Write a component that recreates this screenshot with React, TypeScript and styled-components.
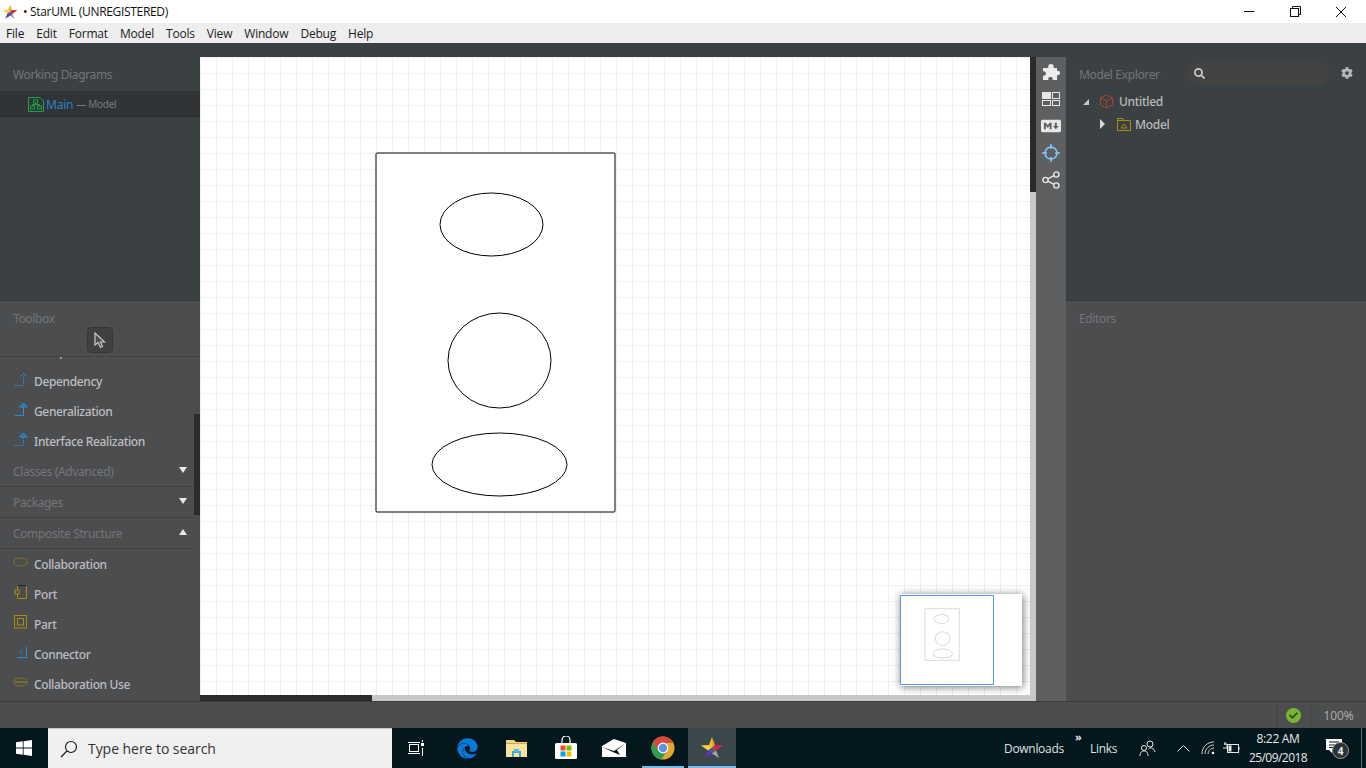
import React from "react";
import styled, { createGlobalStyle } from "styled-components";
import { FaCog, FaSearch, FaEdge, FaMarkdown, FaCheck } from "react-icons/fa";

const Global = createGlobalStyle`
  html, body { margin: 0; padding: 0; height: 100%; overflow: hidden; background: #4c4d4f; }
  * { box-sizing: border-box; }
`;

const Page = styled.div`
  width: 1366px; height: 768px; display: flex; flex-direction: column; overflow: hidden;
  font-family: "Noto Sans", "Open Sans", sans-serif;
`;
const TitleBar = styled.div`
  height: 23px; background: #fff; display: flex; align-items: center; padding-left: 2px;
  font-size: 12px; color: #111; font-family: "Open Sans", sans-serif;
`;
const TitleText = styled.span` margin-left: 5px; letter-spacing: -0.32px; `;
const WinButtons = styled.div` margin-left: auto; display: flex; height: 23px; padding-right: 2px; `;
const WinButton = styled.div`
  width: 46px; height: 23px; display: flex; align-items: center; justify-content: center;
`;
const MenuBar = styled.div`
  height: 20px; background: #eeeeee; display: flex; align-items: center; font-family: "Open Sans", sans-serif;
  font-size: 12px; color: #1c1c1c;
`;
const MenuItem = styled.span` padding: 0 6px; letter-spacing: -0.2px; `;

const Main = styled.div` height: 658px; display: flex; `;
const SideColumn = styled.div<{ $w: number }>`
  width: ${p => p.$w}px; display: flex; flex-direction: column; flex: none;
`;
const DarkPanel = styled.div`
  height: 258px; background: #3b4043; border-bottom: 1px solid #353839; flex: none;
`;
const LightPanel = styled.div`
  height: 400px; background: #4c4d4f; flex: none; display: flex; flex-direction: column; overflow: hidden;
`;
const PanelHeading = styled.div<{ $top?: number }>`
  height: 48px; padding: ${p => p.$top ?? 22}px 0 0 13px; font-size: 12px; line-height: 20px; color: #747678; flex: none;
  letter-spacing: -0.36px;
`;
const SelectedRow = styled.div`
  height: 26px; background: #303437; border-top: 1px solid #2e3234; border-bottom: 1px solid #2a2e30;
  display: flex; align-items: center; padding-left: 28px; font-size: 12px; color: #2f7fc4; letter-spacing: -0.2px;
`;
const RowNote = styled.span` margin-left: 3px; font-size: 10px; color: #787b7d; letter-spacing: -0.3px; `;
const ToolHeader = styled.div`
  height: 56px; flex: none; border-bottom: 1px solid #404143; position: relative;
  padding: 8px 0 0 13px; font-size: 12px; line-height: 20px; color: #747678; letter-spacing: -0.36px;
`;
const CursorButton = styled.div`
  position: absolute; left: 87px; top: 26px; width: 26px; height: 26px; border-radius: 4px;
  background: #3f4041; border: 1px solid #353637; display: flex; align-items: center; justify-content: center;
`;
const ToolList = styled.div` flex: 1; overflow: hidden; position: relative; `;
const ToolScrollInner = styled.div` margin-top: -21px; `;
const ToolThumb = styled.div`
  position: absolute; right: 0; top: 57px; width: 6px; height: 101px; background: #2b2b2b;
`;
const ToolItem = styled.div`
  height: 30px; display: flex; align-items: center; font-size: 12px; color: #bdbec0; font-weight: 500; letter-spacing: -0.36px;
`;
const ToolIcon = styled.span`
  width: 34px; flex: none; display: flex; justify-content: flex-end; position: relative; left: -6px;
  height: 18px; align-items: center; top: -2px;
`;
const GroupHeader = styled.div`
  height: 31px; width: 194px; border-bottom: 1px solid #3d3e40; display: flex; align-items: center; justify-content: space-between;
  padding: 0 7px 0 13px; font-size: 12px; color: #747678; letter-spacing: -0.36px;
`;
const CaretText = styled.span` display: flex; margin-top: -3px; `;

const MiddleColumn = styled.div` flex: 1; display: flex; flex-direction: column; min-width: 0; `;
const TopStrip = styled.div` height: 14px; background: #3b4043; flex: none; `;
const WorkRow = styled.div` flex: 1; display: flex; min-height: 0; `;
const CanvasWrap = styled.div` width: 836px; display: flex; flex-direction: column; flex: none; `;
const CanvasRow = styled.div` flex: 1; display: flex; min-height: 0; `;
const Canvas = styled.div`
  width: 830px; height: 638px; position: relative; overflow: hidden; background-color: #fff;
  background-image:
    linear-gradient(to right, #f0f0f0 1px, transparent 1px),
    linear-gradient(to bottom, #f0f0f0 1px, transparent 1px);
  background-size: 16px 16px;
`;
const DiagramSvg = styled.svg` position: absolute; left: 0; top: 0; `;
const VScroll = styled.div` width: 6px; background: #c8c8c8; `;
const VThumb = styled.div` width: 6px; height: 135px; background: #2b2b2b; `;
const HScroll = styled.div` height: 6px; background: #c8c8c8; flex: none; `;
const HThumb = styled.div` width: 172px; height: 6px; background: #2b2b2b; `;
const MiniMap = styled.div`
  position: absolute; left: 700px; top: 537px; width: 122px; height: 92px; background: #fff;
  box-shadow: 1px 1px 8px rgba(0,0,0,0.55);
`;
const MiniViewport = styled.div`
  position: absolute; left: 0; top: 1px; width: 94px; height: 90px; border: 1px solid #5b9bef;
`;
const MiniSvg = styled.svg` position: absolute; left: 0; top: 0; `;

const ToolStrip = styled.div`
  width: 30px; flex: none; background: #5e5f61; display: flex; flex-direction: column; align-items: center;
  padding-top: 1px;
`;
const StripBtn = styled.div`
  width: 30px; height: 27px; display: flex; align-items: center; justify-content: center; color: #e8e8e8;
`;

const ExplorerHead = styled.div`
  height: 47px; display: flex; align-items: flex-start; padding: 19px 0 0 13px; position: relative;
  font-size: 12px; color: #747678; line-height: 26px; letter-spacing: -0.36px;
`;
const SearchPill = styled.div`
  position: absolute; left: 120px; top: 19px; width: 144px; height: 23px; border-radius: 12px; background: #434442;
  border: 1px solid #3f4244; display: flex; align-items: center; padding-left: 7px; color: #c8c8c8;
`;
const GearSpot = styled.div` position: absolute; left: 275px; top: 24px; color: #b5b6b6; display: flex; `;
const TreeRow = styled.div<{ $indent: number; $h: number }>`
  height: ${p => p.$h}px; display: flex; align-items: center; padding-left: ${p => p.$indent}px;
  font-size: 12px; font-weight: 500; color: #b9babb; letter-spacing: -0.3px;
`;
const TreeCaret = styled.span<{ $w: number }>` width: ${p => p.$w}px; display: flex; flex: none; `;
const TreeIcon = styled.span<{ $w: number }>` width: ${p => p.$w}px; display: flex; flex: none; `;
const TreeLabel = styled.span``;

const StatusBar = styled.div`
  height: 27px; background: #4c4d4f; border-top: 1px solid #3a3b3c; display: flex; justify-content: flex-end; flex: none;
`;
const StatusCell = styled.div<{ $w: number }>`
  width: ${p => p.$w}px; border-left: 1px solid #424345; display: flex; align-items: center; justify-content: center;
  font-size: 12px; color: #a9aaab; letter-spacing: -0.1px;
`;
const CheckDot = styled.div`
  width: 15px; height: 15px; border-radius: 50%; background: #7ab532; display: flex; align-items: center; justify-content: center;
  color: #3c4a2b; font-size: 9px; margin-right: 2px;
`;

const TaskBar = styled.div`
  height: 40px; background: #04171d; display: flex; align-items: stretch; flex: none; color: #e6e9ea;
  font-family: "Open Sans", sans-serif;
`;
const StartButton = styled.div` width: 48px; display: flex; align-items: center; justify-content: center; `;
const SearchBox = styled.div`
  width: 344px; background: #f0f0f0; border-top: 1px solid #c9c9c9; display: flex; align-items: center;
  padding-left: 12px; font-size: 14px; color: #333; gap: 10px; letter-spacing: -0.05px;
`;
const TaskCell = styled.div<{ $w?: number; $active?: boolean; $open?: boolean; $shift?: number }>`
  width: ${p => p.$w ?? 49}px; display: flex; align-items: center; justify-content: center; position: relative;
  padding-right: ${p => p.$shift ?? 0}px;
  background: ${p => (p.$active ? "#3a474d" : "transparent")};
  &::after {
    content: ""; display: ${p => (p.$open ? "block" : "none")}; position: absolute; bottom: 0;
    left: ${p => (p.$active ? 0 : 4)}px; right: ${p => (p.$active ? 0 : 4)}px; height: 2px; background: #76b9ed;
  }
`;
const Tray = styled.div` margin-left: auto; display: flex; align-items: center; height: 100%; font-size: 12px; color: #dfe3e4; `;
const TrayText = styled.span<{ $w: number }>` width: ${p => p.$w}px; text-align: left; letter-spacing: -0.3px; flex: none; `;
const ChevronMark = styled.span` width: 15px; flex: none; align-self: flex-start; font-size: 11px; line-height: 17px; font-weight: 700; `;
const TrayIcon = styled.span<{ $w: number; $left?: number }>`
  width: ${p => p.$w}px; margin-left: ${p => p.$left ?? 0}px; display: flex; justify-content: center; flex: none;
`;
const Clock = styled.div` width: 60px; text-align: center; font-size: 12px; line-height: 19px; flex: none; color: #e6e9ea; white-space: nowrap; `;
const ClockLine = styled.div<{ $ls: number }>` letter-spacing: ${p => p.$ls}px; margin: 0 -6px; `;
const NotifyCell = styled.div` width: 53px; flex: none; position: relative; height: 100%; display: flex; align-items: center; justify-content: center; `;
const Badge = styled.span`
  position: absolute; left: 24px; top: 14px; width: 17px; height: 17px; border-radius: 50%; background: #2b3336;
  border: 1px solid #999; font-size: 10px; font-weight: 700; color: #eee; display: flex; align-items: center; justify-content: center;
`;
const DesktopEdge = styled.div` width: 5px; border-left: 1px solid #5a6a70; height: 100%; flex: none; `;

function StarLogo({ size }: { size: number }) {
  return (
    <svg width={size} height={size} viewBox="0 0 24 24">
      <polygon points="12,1 9,9 12,12" fill="#f5c21f" />
      <polygon points="12,1 15,9 12,12" fill="#f0a21e" />
      <polygon points="1,9.5 9,9 12,12 8,14.5" fill="#fbd334" />
      <polygon points="23,9.5 15,9 12,12 16,14.5" fill="#d8234f" />
      <polygon points="5,22 8,14.5 12,12 12,17.5" fill="#6b2fb0" />
      <polygon points="19,22 16,14.5 12,12 12,17.5" fill="#a3a5a8" />
      <polygon points="8,14.5 12,12 12,17.5" fill="#3e57c4" />
      <polygon points="16,14.5 12,12 12,17.5" fill="#5b5d66" />
    </svg>
  );
}

const Chrome = () => (
  <svg width="24" height="24" viewBox="0 0 24 24">
    <circle cx="12" cy="12" r="11.5" fill="#e3a92c" />
    <path d="M12 .5A11.5 11.5 0 0 0 2 6.3L6.9 15 12 7h10.4A11.5 11.5 0 0 0 12 .5z" fill="#d9493b" />
    <path d="M2 6.3A11.5 11.5 0 0 0 10.6 23.4L15.6 15H7.4z" fill="#2e9d53" />
    <circle cx="12" cy="12" r="5.4" fill="#fff" />
    <circle cx="12" cy="12" r="4.2" fill="#5b93ea" />
  </svg>
);

const Caret = ({ up }: { up?: boolean }) => (
  <CaretText>
    <svg width="8" height="6" viewBox="0 0 8 6">
      <polygon points={up ? "0,6 8,6 4,0" : "0,0 8,0 4,6"} fill="#e8e8e8" />
    </svg>
  </CaretText>
);

const blue = "#2a8fd6";
const gold = "#a98d0c";

const IconDep = () => (
  <svg width="14" height="14" viewBox="0 0 14 14" fill="none">
    <path d="M1 13.5H9.5V4" stroke={blue} strokeDasharray="1.5 1" />
    <path d="M6.5 4.5L9.5 1.5L12.5 4.5" stroke={blue} />
  </svg>
);
const IconGen = () => (
  <svg width="14" height="14" viewBox="0 0 14 14" fill="none">
    <path d="M1 13.5H9.5V5" stroke={blue} />
    <path d="M5.5 5L9.5 1L13.5 5z" stroke={blue} fill="#3a6f95" />
  </svg>
);
const IconReal = () => (
  <svg width="14" height="14" viewBox="0 0 14 14" fill="none">
    <path d="M1 13.5H9.5V5" stroke={blue} strokeDasharray="1.5 1" />
    <path d="M5.5 5L9.5 1L13.5 5z" stroke={blue} fill="#3a6f95" />
  </svg>
);
const IconCollab = () => (
  <svg width="15" height="10" viewBox="0 0 15 10" fill="none">
    <ellipse cx="7.5" cy="5" rx="6.8" ry="4" stroke={gold} strokeDasharray="1.5 1" />
  </svg>
);
const IconPort = () => (
  <svg width="14" height="14" viewBox="0 0 14 14" fill="none">
    <path d="M3.5 .5H12.5V13.5H3.5z" stroke={gold} />
    <path d="M3.5 .5H12.5" stroke="#222" />
    <rect x="1" y="5" width="4" height="4" stroke={gold} fill="#4c4d4f" />
  </svg>
);
const IconPart = () => (
  <svg width="14" height="14" viewBox="0 0 14 14" fill="none">
    <rect x=".5" y=".5" width="12" height="12.5" stroke={gold} />
    <rect x="3.5" y="3.5" width="6" height="6.5" stroke={gold} />
  </svg>
);
const IconConn = () => (
  <svg width="12" height="13" viewBox="0 0 12 13" fill="none">
    <path d="M1 11.5H10.5V1" stroke={blue} />
    <path d="M7 4.5H4.5V8H7" stroke="#256fa8" />
  </svg>
);
const IconUse = () => (
  <svg width="15" height="10" viewBox="0 0 15 10" fill="none">
    <ellipse cx="7.5" cy="5" rx="6.8" ry="4" stroke={gold} strokeDasharray="1.5 1" />
    <path d="M2 5H13" stroke={gold} />
  </svg>
);

const tools1 = [
  { n: "Composition", i: <IconDep /> },
  { n: "Dependency", i: <IconDep /> },
  { n: "Generalization", i: <IconGen /> },
  { n: "Interface Realization", i: <IconReal /> },
];
const tools2 = [
  { n: "Collaboration", i: <IconCollab /> },
  { n: "Port", i: <IconPort /> },
  { n: "Part", i: <IconPart /> },
  { n: "Connector", i: <IconConn /> },
  { n: "Collaboration Use", i: <IconUse /> },
];

const DiagramShapes = ({ stroke, sw }: { stroke: string; sw: number }) => (
  <g fill="none" stroke={stroke} strokeWidth={sw}>
    <rect x="176" y="96" width="239" height="359" rx="1" fill="#fff" />
    <ellipse cx="291.5" cy="167.5" rx="51.5" ry="31.5" />
    <ellipse cx="299.5" cy="303.5" rx="51.5" ry="47.5" />
    <ellipse cx="299.5" cy="407.5" rx="67.5" ry="31.5" />
  </g>
);

export default function App() {
  const menus = ["File", "Edit", "Format", "Model", "Tools", "View", "Window", "Debug", "Help"];
  return (
    <Page>
      <Global />
      <TitleBar>
        <StarLogo size={16} />
        <TitleText>• StarUML (UNREGISTERED)</TitleText>
        <WinButtons>
          <WinButton>
            <svg width="11" height="11" viewBox="0 0 11 11"><path d="M0 5.5H10.5" stroke="#111" /></svg>
          </WinButton>
          <WinButton>
            <svg width="11" height="11" viewBox="0 0 11 11" fill="none" stroke="#111">
              <rect x=".5" y="2.5" width="8" height="8" /><path d="M2.5 2.5V.5H10.5V8.5H8.5" />
            </svg>
          </WinButton>
          <WinButton>
            <svg width="12" height="12" viewBox="0 0 12 12" stroke="#111"><path d="M1 1L11 11M11 1L1 11" /></svg>
          </WinButton>
        </WinButtons>
      </TitleBar>
      <MenuBar>
        {menus.map(m => <MenuItem key={m}>{m}</MenuItem>)}
      </MenuBar>
      <Main>
        <SideColumn $w={200}>
          <DarkPanel>
            <PanelHeading>Working Diagrams</PanelHeading>
            <SelectedRow>
              <svg width="16" height="15" viewBox="0 0 16 15" fill="none" stroke="#1fa34a" style={{ marginRight: 2 }}>
                <path d="M.5 .5H12L15.5 4V14.5H.5z" />
                <rect x="5.5" y="3" width="4" height="3" />
                <rect x="2.5" y="9" width="4" height="3" />
                <rect x="9.5" y="9" width="4" height="3" />
                <path d="M7.5 6V7.5H4.5V9M7.5 7.5H11.5V9" />
              </svg>
              Main<RowNote>— Model</RowNote>
            </SelectedRow>
          </DarkPanel>
          <LightPanel>
            <ToolHeader>
              Toolbox
              <CursorButton>
                <svg width="14" height="17" viewBox="0 0 14 17">
                  <path d="M2 1V13L5 10.5L7.5 15.5L9.5 14.5L7.5 10H11.5z" fill="#4a4b4c" stroke="#c9c9c9" strokeWidth="1.2" />
                </svg>
              </CursorButton>
            </ToolHeader>
            <ToolList>
              <ToolScrollInner>
                {tools1.map(t => (
                  <ToolItem key={t.n}><ToolIcon>{t.i}</ToolIcon>{t.n}</ToolItem>
                ))}
                <GroupHeader>Classes (Advanced)<Caret /></GroupHeader>
                <GroupHeader>Packages<Caret /></GroupHeader>
                <GroupHeader>Composite Structure<Caret up /></GroupHeader>
                {tools2.map(t => (
                  <ToolItem key={t.n}><ToolIcon>{t.i}</ToolIcon>{t.n}</ToolItem>
                ))}
              </ToolScrollInner>
              <ToolThumb />
            </ToolList>
          </LightPanel>
        </SideColumn>
        <MiddleColumn>
          <TopStrip />
          <WorkRow>
            <CanvasWrap>
              <CanvasRow>
                <Canvas>
                  <DiagramSvg width="830" height="638">
                    <DiagramShapes stroke="#000" sw={1} />
                  </DiagramSvg>
                  <MiniMap>
                    <MiniSvg width="122" height="92">
                      <g transform="scale(0.144) translate(-3,6)">
                        <DiagramShapesMini />
                      </g>
                    </MiniSvg>
                    <MiniViewport />
                  </MiniMap>
                </Canvas>
                <VScroll><VThumb /></VScroll>
              </CanvasRow>
              <HScroll><HThumb /></HScroll>
            </CanvasWrap>
            <ToolStrip>
              <StripBtn>
                <svg width="18" height="18" viewBox="0 0 18 18" fill="#ececec">
                  <path d="M1 5H6.5C6 4 6 1 9 1C12 1 12 4 11.5 5H15V8C16 7.3 18 8 18 10C18 12 16 12.7 15 12V17H10.5C11 16 11 14 8.5 14C6 14 6 16 6.5 17H1V12.5C2 13 4 12.5 4 10.5C4 8.5 2 8 1 8.5Z" />
                </svg>
              </StripBtn>
              <StripBtn>
                <svg width="18" height="14" viewBox="0 0 18 14" fill="#e8e8e8" stroke="#e8e8e8">
                  <rect x=".5" y=".5" width="8" height="6" />
                  <rect x="10.5" y=".5" width="7" height="6" fill="none" />
                  <rect x=".5" y="8.5" width="8" height="5" fill="none" />
                  <rect x="10.5" y="8.5" width="7" height="5" fill="none" />
                </svg>
              </StripBtn>
              <StripBtn><FaMarkdown size={20} /></StripBtn>
              <StripBtn>
                <svg width="18" height="18" viewBox="0 0 18 18" fill="none" stroke="#7fcdf7" strokeWidth="1.5">
                  <circle cx="9" cy="9" r="6" />
                  <path d="M9 0V5M9 13V18M0 9H5M13 9H18" />
                </svg>
              </StripBtn>
              <StripBtn>
                <svg width="18" height="18" viewBox="0 0 18 18" fill="none" stroke="#e8e8e8" strokeWidth="1.4">
                  <circle cx="3.5" cy="9" r="2.6" />
                  <circle cx="14.3" cy="3.5" r="2.6" />
                  <circle cx="14.3" cy="14.5" r="2.6" />
                  <path d="M5.8 7.8L12 4.7M5.8 10.2L12 13.3" />
                </svg>
              </StripBtn>
            </ToolStrip>
          </WorkRow>
        </MiddleColumn>
        <SideColumn $w={300}>
          <DarkPanel>
            <ExplorerHead>
              Model Explorer
              <SearchPill><FaSearch size={11} /></SearchPill>
              <GearSpot><FaCog size={12} /></GearSpot>
            </ExplorerHead>
            <TreeRow $indent={16} $h={23}>
              <TreeCaret $w={17}>
                <svg width="8" height="8" viewBox="0 0 8 8"><polygon points="7,1 7,7 1,7" fill="#c8c8c8" /></svg>
              </TreeCaret>
              <TreeIcon $w={20}>
                <svg width="15" height="15" viewBox="0 0 15 15" fill="none" stroke="#a8432f">
                  <path d="M7.5 1L13.5 4V11L7.5 14L1.5 11V4z" /><path d="M1.5 4L7.5 7L13.5 4M7.5 7V14" />
                </svg>
              </TreeIcon>
              <TreeLabel>Untitled</TreeLabel>
            </TreeRow>
            <TreeRow $indent={33} $h={22}>
              <TreeCaret $w={18}>
                <svg width="6" height="10" viewBox="0 0 6 10"><polygon points="1,0 6,5 1,10" fill="#d8d8d8" /></svg>
              </TreeCaret>
              <TreeIcon $w={18}>
                <svg width="14" height="13" viewBox="0 0 14 13" fill="none" stroke={gold}>
                  <path d="M.5 12.5V.5H6L7 2.5H13.5V12.5z" /><path d="M.5 2.5H7" /><path d="M4 10L7 6L10 10z" />
                </svg>
              </TreeIcon>
              <TreeLabel>Model</TreeLabel>
            </TreeRow>
          </DarkPanel>
          <LightPanel>
            <PanelHeading $top={8}>Editors</PanelHeading>
          </LightPanel>
        </SideColumn>
      </Main>
      <StatusBar>
        <StatusCell $w={33}><CheckDot><FaCheck /></CheckDot></StatusCell>
        <StatusCell $w={56}>100%</StatusCell>
      </StatusBar>
      <TaskBar>
        <StartButton>
          <svg width="16" height="16" viewBox="0 0 16 16" fill="#fff">
            <polygon points="0,2.3 6.8,1.3 6.8,7.6 0,7.6" />
            <polygon points="7.6,1.2 16,0 16,7.6 7.6,7.6" />
            <polygon points="0,8.4 6.8,8.4 6.8,14.7 0,13.7" />
            <polygon points="7.6,8.4 16,8.4 16,16 7.6,14.8" />
          </svg>
        </StartButton>
        <SearchBox>
          <svg width="18" height="18" viewBox="0 0 18 18" fill="none" stroke="#111" strokeWidth="1.1">
            <circle cx="11" cy="7" r="5.5" /><path d="M7 11L1 17" />
          </svg>
          Type here to search
        </SearchBox>
        <TaskCell $w={51} $shift={3}>
          <svg width="16" height="16" viewBox="0 0 16 16" fill="none" stroke="#fff">
            <rect x="1.5" y="4.5" width="9" height="7" /><path d="M0 2.5H12M0 13.5H12" />
            <path d="M14.5 0V2" /><rect x="13" y="3" width="3" height="3" fill="#fff" stroke="none" /><path d="M14.5 8V16" />
          </svg>
        </TaskCell>
        <TaskCell><FaEdge size={21} color="#0a78d7" /></TaskCell>
        <TaskCell>
          <svg width="22" height="19" viewBox="0 0 22 19">
            <path d="M0 1H8L10 3H21V18H0z" fill="#f3d77c" />
            <path d="M0 4H21V18H0z" fill="#fbe29a" />
            <rect x="0" y="4" width="21" height="1" fill="#caa94c" />
            <path d="M6 12H15V18H13V14H8V18H6z" fill="#3aa9d8" />
            <rect x="8" y="10" width="5" height="3" fill="#4cc0e8" />
          </svg>
        </TaskCell>
        <TaskCell>
          <svg width="24" height="24" viewBox="0 0 24 24">
            <path d="M8 7V4a4 4 0 0 1 8 0v3" fill="none" stroke="#fff" strokeWidth="1.2" />
            <rect x="1" y="7" width="22" height="16" rx="1.5" fill="#fff" />
            <rect x="6.5" y="9.5" width="5" height="5" fill="#f25022" />
            <rect x="12.5" y="9.5" width="5" height="5" fill="#7fba00" />
            <rect x="6.5" y="15.5" width="5" height="5" fill="#00a4ef" />
            <rect x="12.5" y="15.5" width="5" height="5" fill="#ffb900" />
          </svg>
        </TaskCell>
        <TaskCell $w={48}>
          <svg width="24" height="18" viewBox="0 0 24 18">
            <polygon points="0,7 12,0 24,4 24,18 0,18" fill="#fff" />
            <polygon points="0,8 12,12 24,4 15,11 18,16 12,13.5" fill="#04171d" />
          </svg>
        </TaskCell>
        <TaskCell $open $w={50}><Chrome /></TaskCell>
        <TaskCell $active $open $w={48}><StarLogo size={24} /></TaskCell>
        <Tray>
          <TrayText $w={71}>Downloads</TrayText>
          <ChevronMark>»</ChevronMark>
          <TrayText $w={43}>Links</TrayText>
          <TrayIcon $w={28}>
            <svg width="17" height="17" viewBox="0 0 17 17" fill="none" stroke="#e6e9ea">
              <circle cx="11" cy="4" r="3" /><circle cx="5" cy="8" r="2.5" />
              <path d="M1 16C1 12 3 11 5 11C7 11 9 12 9 16M9.5 9C11 7 15 7.5 16 12" />
            </svg>
          </TrayIcon>
          <TrayIcon $w={44}>
            <svg width="13" height="8" viewBox="0 0 13 8" fill="none" stroke="#e6e9ea"><path d="M.5 7.5L6.5 1.5L12.5 7.5" /></svg>
          </TrayIcon>
          <TrayIcon $w={6}>
            <svg width="14" height="14" viewBox="0 0 14 14" fill="none" stroke="#cfd3d4" style={{ flex: "none" }}>
              <path d="M1 13C1 6 6 1 13 1M4 13C4 8 8 4 13 4M7 13C7 10 10 7 13 7" />
              <circle cx="12" cy="12" r="1.3" fill="#fff" stroke="none" />
            </svg>
          </TrayIcon>
          <TrayIcon $w={34} $left={3}>
            <svg width="17" height="12" viewBox="0 0 17 12" fill="none" stroke="#e6e9ea">
              <rect x="4.5" y="2.5" width="11" height="8" /><rect x="5.5" y="3.5" width="3" height="6" fill="#e6e9ea" stroke="none" />
              <path d="M16 5V8M0 6H4M2 3V0M1 2H4V6" />
            </svg>
          </TrayIcon>
          <Clock>
            <ClockLine $ls={-0.3}>8:22 AM</ClockLine>
            <ClockLine $ls={-0.55}>25/09/2018</ClockLine>
          </Clock>
          <NotifyCell>
            <svg width="16" height="16" viewBox="0 0 16 16" style={{ marginTop: -4, marginLeft: -2 }}>
              <path d="M0 1H16V12H6V15L3 12H0z" fill="#fff" />
              <path d="M3 4H13M3 7H13M3 9.5H9" stroke="#04171d" />
            </svg>
            <Badge>4</Badge>
          </NotifyCell>
          <DesktopEdge />
        </Tray>
      </TaskBar>
    </Page>
  );
}

function DiagramShapesMini() {
  return (
    <g fill="none" stroke="#dcdcdc" strokeWidth={7}>
      <rect x="176" y="96" width="239" height="359" />
      <ellipse cx="291.5" cy="167.5" rx="51.5" ry="31.5" />
      <ellipse cx="299.5" cy="303.5" rx="51.5" ry="47.5" />
      <ellipse cx="299.5" cy="407.5" rx="67.5" ry="31.5" />
    </g>
  );
}
